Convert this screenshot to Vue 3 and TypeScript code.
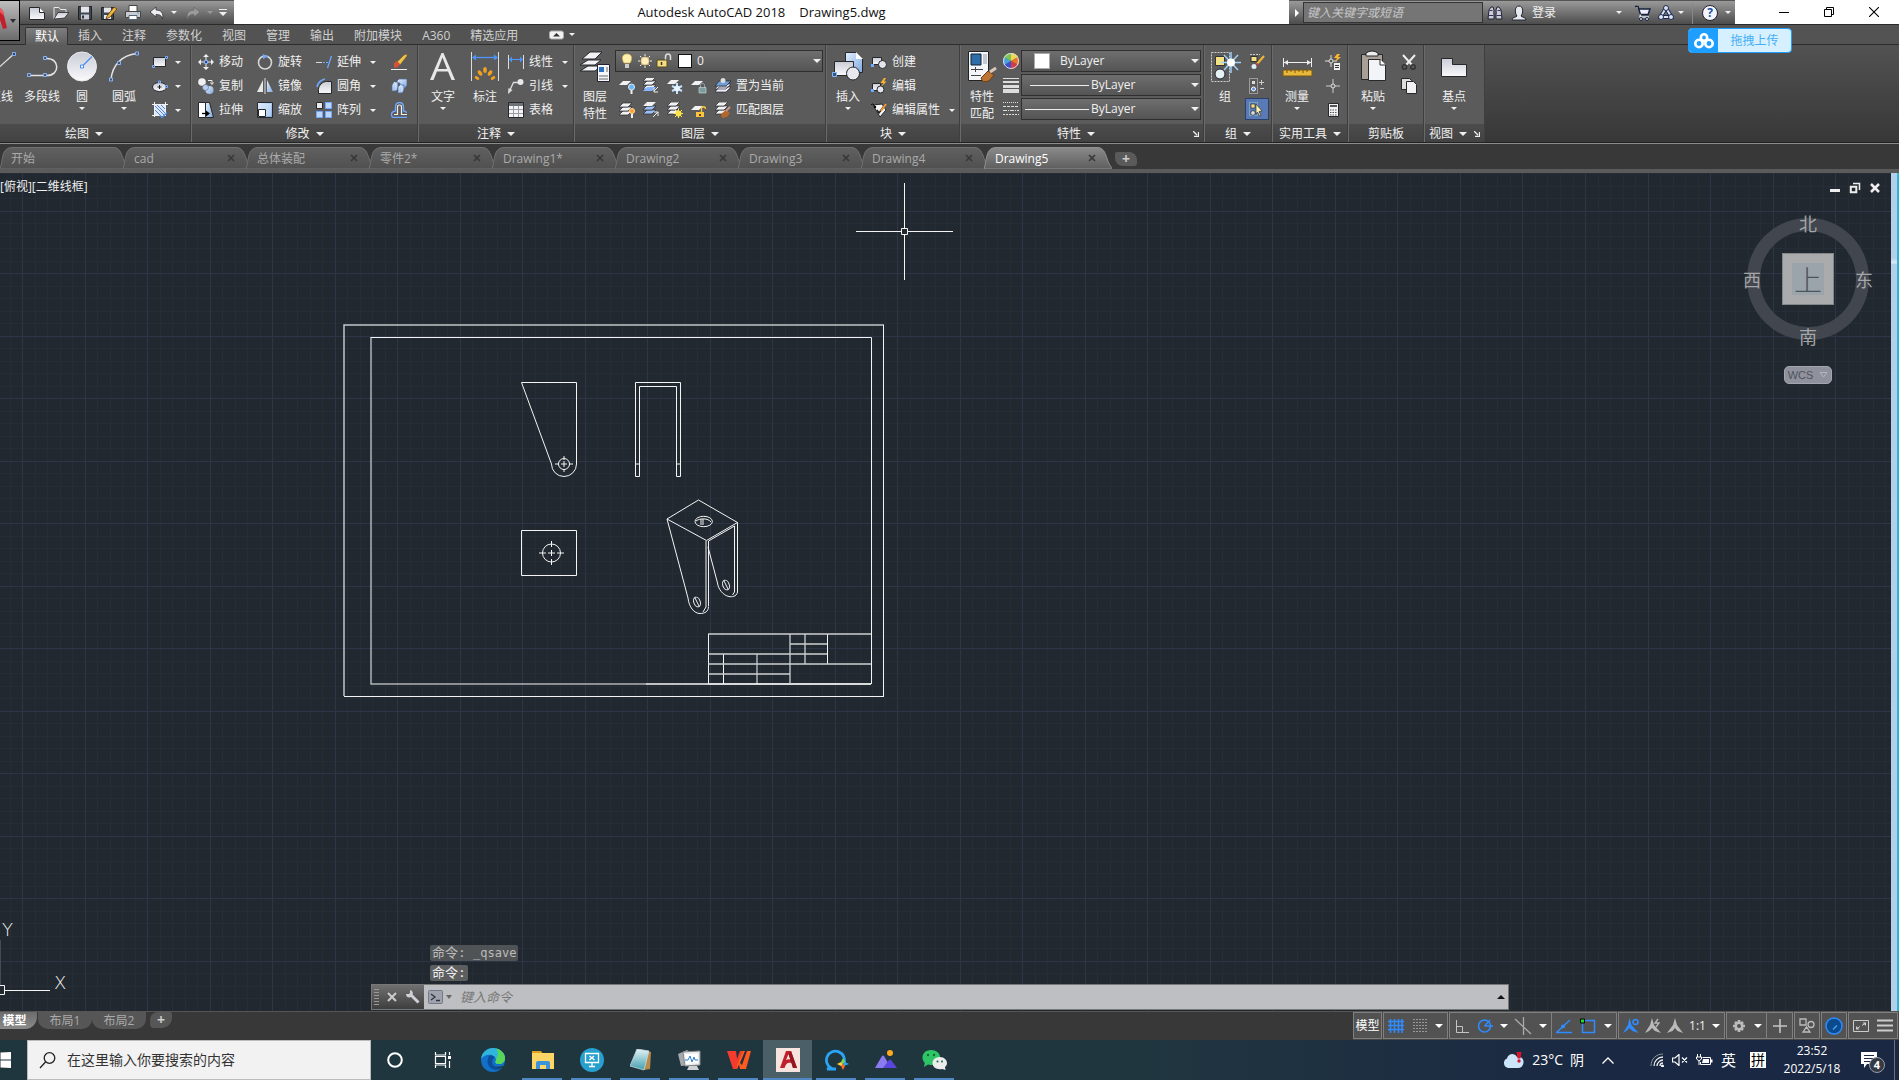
<script setup lang="ts">
import { h, ref } from 'vue'

const O = '#26282c'
const stack = (fill: string, x = 0, y = 0) =>
  [8, 4, 0].map(d => `<path d="M${x + 4} ${y + d}h9l-4 4h-9z" fill="${fill}" stroke="${O}" stroke-width=".7"/>`).join('')

// name -> [width, height, markup]
const art: Record<string, [number, number, string]> = {
  fresh: [16, 16, `<path d="M.5 2.500h10l5 5v7h-15z" fill="url(#gw)" stroke="${O}"/><path d="M10.500 2.500v5h5" fill="#fff" stroke="${O}"/>`],
  open: [16, 16, `<path d="M1 14V2.500h5l1.500 2H13V8" fill="#777" stroke="#e8e8ee"/><path d="M1 14l4-6.500h11L11.500 13z" fill="url(#gw)" stroke="${O}" stroke-width=".8"/>`],
  save: [16, 16, `<path d="M1.500 1.500h13v13h-13z" fill="#3d4653" stroke="#222"/><path d="M4 1.500h8v6H4z" fill="#e6e6ea"/><path d="M4 9.500h8v5H4z" fill="#c9ccd4"/><path d="M5 10.500h2v3H5z" fill="#333"/>`],
  saveas: [16, 16, `<path d="M.5 2.500h12v12H.5z" fill="#3d4653" stroke="#222"/><path d="M3 2.500h7v5H3zM3 10h7v4H3z" fill="#e6e6ea"/><path d="M6 11l7-9 3 2-7 8-4 2z" fill="#f0b53c" stroke="#5b3b12" stroke-width=".8"/>`],
  print: [16, 16, `<path d="M4 .5h8V7H4z" fill="#fff" stroke="#444"/><path d="M.5 6.500h15v6H.500z" fill="#c9ccd2" stroke="#444"/><path d="M4 10.500h8v4H4z" fill="#fff" stroke="#567"/><path d="M12 8h2" stroke="#5599dd"/>`],
  undo: [16, 16, `<path d="M1 7l6-5v3c5 0 8 3 6.500 9C12.500 10.500 11 9.500 7 9.500V12z" fill="#eceef2" stroke="#333" stroke-width=".8"/>`],
  redo: [16, 16, `<path d="M15 7L9 2v3c-5 0-8 3-6.500 9C3.500 10.500 5 9.500 9 9.500V12z" fill="#9a9a9a" stroke="#6a6a6a" stroke-width=".8"/>`],
  binoc: [18, 16, `<path d="M2 14l1-9 2-3h2l1 3v9zM16 14l-1-9-2-3h-2l-1 3v9z" fill="#ccd" stroke="#223"/><path d="M7 6h4v3H7z" fill="#556"/><path d="M3.500 5.500h3M11.500 5.500h3M2.500 10.500h5M10.500 10.500h5" stroke="#335"/>`],
  user: [16, 16, `<path d="M1 15c0-3 4-2.500 5-4-2-2-3-10 2-10s4 8 2 10c1 1.500 5 1 5 4z" fill="#e8e9ee" stroke="#1f2430"/>`],
  cart: [17, 16, `<path d="M1 1.500h3l2.500 8H14L16 4H5" fill="#eef" stroke="#14203c" stroke-width="1.400"/><path d="M6.500 9.500L6 12h9" stroke="#dfe4f0" stroke-width="1.500" fill="none"/><circle cx="7" cy="14" r="1.500" fill="#eef" stroke="#14203c"/><circle cx="13" cy="14" r="1.500" fill="#eef" stroke="#14203c"/>`],
  tri: [16, 16, `<path d="M8 3l5.500 9h-11z" fill="none" stroke="#1d2b52" stroke-width="4"/><path d="M8 3l5.500 9h-11z" fill="none" stroke="#dfe4f4" stroke-width="2"/><g fill="#dfe4f4" stroke="#1d2b52"><circle cx="8" cy="3" r="2.500"/><circle cx="13" cy="12" r="2.500"/><circle cx="3" cy="12" r="2.500"/></g>`],
  help: [16, 16, `<circle cx="8" cy="8" r="7.500" fill="#f4f5fa" stroke="#223"/>`],
  min: [10, 10, `<path d="M0 5.500h10" stroke="#000"/>`],
  restore: [10, 10, `<path d="M.5 2.500h7v7h-7zM2.500 2V.5h7v7H8" fill="none" stroke="#000"/>`],
  close: [10, 10, `<path d="M0 0l10 10M10 0L0 10" stroke="#000" stroke-width="1.100"/>`],
  pill: [16, 10, `<rect x=".5" y="1" width="14" height="8" rx="2" fill="#f2f2f2" stroke="#aaa"/><path d="M4 6.500h7L7.500 3z" fill="#333"/>`],
  line: [32, 32, `<path d="M0 30L30 3" stroke="#e4e4e4" stroke-width="1.300"/><path d="M27.500 2.500h3v3h-3z" fill="#445" stroke="#7fb0ff"/>`],
  pline: [32, 32, `<path d="M3 25.500h18c13 0 13-17 0-17" fill="none" stroke="#e4e4e4" stroke-width="1.500"/><g fill="#4c5568" stroke="#86b4ff"><path d="M1.500 23.500h3v3h-3zM17.500 23.500h3v3h-3zM17.500 6.500h3v3h-3z"/></g>`],
  circle: [32, 32, `<circle cx="16" cy="16.500" r="14.500" fill="url(#gw)" stroke="#ececf0"/><path d="M16 16.500L26 6.500" stroke="#4b8df0" stroke-width="1.300"/><path d="M14.500 15h3v3h-3z" fill="#fff" stroke="#4b8df0"/>`],
  arc: [32, 32, `<path d="M3 30C4 15 14 5 29 3.500" fill="none" stroke="#e4e4e4" stroke-width="1.500"/><g fill="#4c5568" stroke="#86b4ff"><path d="M1.500 28h3v3h-3zM9.500 11.500h3v3h-3zM27.500 2h3v3h-3z"/></g>`],
  rect: [16, 16, `<path d="M1.500 3.500h12v9h-12z" fill="url(#gw)" stroke="${O}"/><path d="M.5 11.500h2v2h-2zM13.500 2.500h2v2h-2z" fill="#446" stroke="#7fb0ff"/>`],
  ellipse: [16, 16, `<ellipse cx="7.500" cy="9" rx="7" ry="4.500" fill="url(#gw)" stroke="${O}"/><path d="M5.500 9h4M7.500 7v4" stroke="#222"/><path d="M6.500 3h2v2h-2zM13.500 7.500h2v2h-2z" fill="#446" stroke="#7fb0ff"/>`],
  hatch: [16, 16, `<path d="M3 3h10v10H3z" fill="#dfe9fc"/><path d="M3 8l5 5M3 4l9 9M5 3l8 8M9 3l4 4" stroke="#4f86d8"/><path d="M2.500 0v15M0 2.500h16M13.500 0v14M0 13.500h14" stroke="#f2f2f2" fill="none"/><path d="M10 15.500l5-5M8 13l2 3" stroke="#4b8df0" stroke-width="1.300"/>`],
  move: [16, 16, `<path d="M8 0l3 3H5zM8 16l3-3H5zM0 8l3-3v6zM16 8l-3-3v6z" fill="#eee"/><path d="M8 3v3M8 10v3M3 8h3M10 8h3" stroke="#eee"/><path d="M6.500 6.500h3v3h-3z" fill="#446" stroke="#7fb0ff"/>`],
  rotate: [16, 16, `<circle cx="8" cy="8.500" r="6.500" fill="none" stroke="#d6d6d6" stroke-width="1.600"/><path d="M6 0l5 2.500L6 5z" fill="#6fa8ff"/>`],
  copy: [16, 16, `<circle cx="4" cy="4" r="3.800" fill="#f1f1f4"/><circle cx="11.500" cy="12" r="4" fill="url(#gb)"/><circle cx="7.500" cy="9.500" r="3" fill="#b9cdf0" stroke="#5b6b85" stroke-width=".6"/><path d="M10 2.500h4v3M12.500 4.500L14 6.500l1.500-2" stroke="#eee" fill="none"/>`],
  mirror: [16, 16, `<path d="M6 2v12H0z" fill="#e8e8ec"/><path d="M10 2v12h6z" fill="url(#gb)"/><path d="M8 0v16" stroke="#ddd"/>`],
  stretch: [16, 16, `<path d="M.5.500h7v15h-7z" fill="#fff" stroke="${O}"/><path d="M7.500.500h4l4 15h-8z" fill="url(#gb)" stroke="${O}"/><path d="M4 11.500h6" stroke="#000" stroke-width="1.300"/><path d="M8 8.500l4 3-4 3z"/>`],
  scale: [16, 16, `<path d="M.5.500h15v15H.500z" fill="url(#gb)" stroke="${O}"/><path d="M2 2h12v12H9V7H2z" fill="#dce9fb" opacity=".5"/><path d="M1.500 7.500h7v7h-7z" fill="#fff" stroke="${O}"/>`],
  extend: [16, 16, `<path d="M0 8.500h6" stroke="#ddd"/><path d="M7 8.500h5" stroke="#6fa8ff" stroke-dasharray="2 1"/><path d="M15.500 2l-4 12" stroke="#6fa8ff" stroke-width="1.300"/>`],
  fillet: [16, 16, `<path d="M2.500 15.500v-4c0-4 4-8 8-8h5v12z" fill="url(#gw)" stroke="${O}"/><path d="M1 9c1-5 4-7 8-8" stroke="#6fa8ff" stroke-width="1.600" fill="none"/>`],
  array: [16, 16, `<path d="M.5.500h6v6h-6z" fill="#e9e9ee" stroke="${O}"/><g fill="#bdd6ff" stroke="#6fa8ff"><path d="M9.500.500h6v6h-6zM9.500 9.500h6v6h-6zM.5 9.500h6v6h-6z"/></g>`],
  erase: [16, 16, `<path d="M6 8l7-7 3-1v2L9 11z" fill="#ecc44b" stroke="#7b5718" stroke-width=".6"/><path d="M3 9l3-2 3 3-2 3-4 1z" fill="#d5503a"/><path d="M0 15.500h16" stroke="#eee"/>`],
  explode: [16, 16, `<g fill="url(#gb)" stroke="#4d6a95" stroke-width=".7"><path d="M6 3l2-2h8v6l-2 3H9V5H6z"/><path d="M1 7l2-3h4v6l-2 3H1z"/><path d="M7 9l2-2h4v5l-2 3H7z"/></g><path d="M3 4l2 2v6M9 7l2 2v5" stroke="#eef4ff" stroke-width=".8" fill="none"/>`],
  offset: [16, 16, `<path d="M16 15.500H3q-2.500 0-2.500-3t4-3.500V5q0-4.500 4-4.500t4 4.500v4q3 0 3 2" fill="none" stroke="#6fa8ff" stroke-width="1.300"/><path d="M16 12.500h-5.500V5q0-2-2-2t-2 2v7.500H3" fill="none" stroke="#eee" stroke-width="1.200"/>`],
  letter: [32, 32, `<path d="M3 30L14.500 3h2L28 30h-3.500l-3.500-8.500H10L6.500 30zM11 19h9L15.500 7.500z" fill="#e8e8e8"/>`],
  dim: [28, 32, `<path d="M.5 2v29M27.500 2v29" stroke="#ddd"/><path d="M2 7.500h24" stroke="#4d94ff" stroke-width="1.300"/><path d="M1 7.500l4-3v6zM27 7.500l-4-3v6z" fill="#4d94ff"/><g fill="#f3a21f"><ellipse cx="14" cy="20" rx="1.800" ry="3"/><ellipse cx="9" cy="23" rx="1.800" ry="3" transform="rotate(-35 9 23)"/><ellipse cx="19" cy="23" rx="1.800" ry="3" transform="rotate(35 19 23)"/><ellipse cx="6" cy="28" rx="1.500" ry="2.500" transform="rotate(-60 6 28)"/><ellipse cx="22" cy="28" rx="1.500" ry="2.500" transform="rotate(60 22 28)"/></g>`],
  linear: [16, 16, `<path d="M.5 1v14M15.500 1v14" stroke="#ddd"/><path d="M2 5.500h12" stroke="#4d94ff"/><path d="M1 5.500l3-3v6zM15 5.500l-3-3v6z" fill="#4d94ff"/>`],
  leader: [16, 16, `<path d="M1 14L5.500 4.500H10" stroke="#ddd" fill="none" stroke-width="1.300"/><circle cx="12.500" cy="4" r="3" fill="#e8e8ec"/><path d="M0 16l.5-6 4 2z" fill="#ddd"/>`],
  table: [16, 16, `<path d="M.5.500h15v15H.500z" fill="#f3f3f6" stroke="${O}"/><path d="M1 1h14v3H1z" fill="#6d7178"/><path d="M1 7.500h14M1 11.500h14M5.500 4v11M10.500 4v11" stroke="#9a9da5"/>`],
  layers: [32, 32, `<g fill="#f2f2f5" stroke="${O}"><path d="M9 16h13l-6 5H1z"/><path d="M9 10h13l-6 5H1z"/><path d="M11 2h12l-7 7H3z"/></g><path d="M18.500 14.500h12v17h-12z" fill="#f5f6fa" stroke="#223"/><path d="M20 17h5v5h-5z" fill="#2f6fc2"/><path d="M28 17v5M20 26h9M20 29h9" stroke="#666"/>`],
  off: [16, 16, `<path d="M4 3h8L8 7H0z" fill="#f2f2f5"/><circle cx="12.500" cy="9" r="3" fill="#6fb4f5" stroke="#d8ecff"/><path d="M11.500 12h2v4h-2z" fill="#eee"/>`],
  iso: [16, 16, stack('#f2f2f5', 0, -1) + `<path d="M4 9h9l-4 4H0z" fill="#86b6ff"/><path d="M15 9l-4 4M11 10v4h4" stroke="#eee" fill="none"/>`],
  freeze: [16, 16, `<path d="M4 2h8L8 6H0z" fill="#f2f2f5"/><path d="M10 5v11M5 8l10 5M15 8L5 13" stroke="#bfe0ff" stroke-width="2"/><circle cx="10" cy="10.500" r="3" fill="#fff" opacity=".7"/>`],
  lock: [16, 16, `<path d="M4 3h8L8 7H0z" fill="#f2f2f5"/><path d="M9.500 10V7.500c0-3 4-3 4 0V10" stroke="#9ab" fill="none"/><path d="M8 9.500h7V15H8z" fill="#7d9c9c" stroke="#cdd" stroke-width=".6"/>`],
  current: [16, 16, `<path d="M4 9h12l-5 5H0zM4 6h12l-5 5H0z" fill="#eef" stroke="${O}" stroke-width=".7"/><path d="M4 3h12l-5 5H0z" fill="#6f9ed8" stroke="${O}" stroke-width=".7"/><circle cx="8" cy="2.500" r="2.500" fill="#ddd"/>`],
  on: [16, 16, stack('#f2f2f5', 0, 1) + `<circle cx="13" cy="9" r="2.500" fill="#ff9d2c" stroke="#ffe0a0"/><path d="M12 12h2v4h-2z" fill="#eee"/>`],
  uniso: [16, 16, stack('#9cc0f5', 0, 0) + `<path d="M4 0h9L9 4H0z" fill="#f2f2f5"/><path d="M10 15l5-5M11 10h4v4" stroke="#eee" fill="none"/>`],
  thaw: [16, 16, stack('#f2f2f5', 0, 0) + `<circle cx="11.500" cy="11.500" r="3" fill="#ffe34a"/><path d="M11.500 6.500v9.500M6.500 11.500h9.500M8 8l7 7M15 8l-7 7" stroke="#ffe34a"/>`],
  unlock: [16, 16, `<path d="M4 4h8L8 8H0z" fill="#f2f2f5"/><path d="M10.500 10V7c0-3 4-3 4 0" stroke="#ffc53a" fill="none" stroke-width="1.300"/><path d="M5 10h8v5H5z" fill="#ffc53a"/><path d="M8 12h2v2H8z" fill="#543"/>`],
  match: [16, 16, stack('#f2f2f5', 0, 0) + `<path d="M6 12l5-4 4 3-3 4-5 1z" fill="#b5672a"/><path d="M11 9l4-4" stroke="#c98" stroke-width="2"/>`],
  bulb: [14, 16, `<path d="M7 1c-6 0-5 6-3 9h6c2-3 3-9-3-9z" fill="#fff0ae" stroke="#d8b65a" stroke-width=".7"/><path d="M5 11h4v4H5z" fill="#ccc"/>`],
  sun: [16, 16, `<circle cx="8" cy="8" r="4" fill="#ffefc0" stroke="#e8c27a"/><path d="M8 1v2M8 13v2M1 8h2M13 8h2M3 3l1.500 1.500M11.500 11.500L13 13M13 3l-1.500 1.500M3 13l1.500-1.500" stroke="#eee"/>`],
  padlock: [16, 16, `<path d="M9.500 7V4c0-4 5-4 5 0v3" stroke="#ddd" fill="none" stroke-width="1.500"/><path d="M1 7h10v7H1z" fill="#f2dc82" stroke="#5b4a1c"/><path d="M5.500 9v3" stroke="#432" stroke-width="1.500"/>`],
  insert: [32, 32, `<path d="M13.500 2.500h11l6 6v14h-17z" fill="url(#gb)" stroke="${O}"/><path d="M24 2l7 7h-7z" fill="#fff"/><path d="M2.500 11.500h19v14h-19z" fill="url(#gw)" stroke="${O}"/><circle cx="21" cy="23.500" r="6.500" fill="#e8e9ef" stroke="${O}"/><path d="M.5 22.500h4v4h-4z" fill="#357" stroke="#86b4ff"/>`],
  create: [16, 16, `<path d="M1.500 3.500h9v7h-9z" fill="url(#gw)" stroke="${O}"/><circle cx="11.500" cy="10.500" r="4" fill="#e4e5ec" stroke="${O}"/><path d="M0 10h3v3H0z" fill="#6fa8ff"/>`],
  edit: [16, 16, `<path d="M1.500 5.500h8v7h-8z" fill="url(#gw)" stroke="${O}"/><circle cx="9.500" cy="11.500" r="3.500" fill="#e4e5ec" stroke="${O}"/><path d="M13 0L9.500 5h3L10 9l5.500-5.500H13L15 0z" fill="#ffb52c"/><path d="M0 11h3v3H0z" fill="#6fa8ff"/>`],
  attr: [16, 16, `<path d="M2 3l9-1 4 6-6 7z" fill="#f4f4f6" stroke="${O}"/><circle cx="4" cy="5" r="1.200"/><path d="M0 3q2-3 4 2" stroke="#111" fill="none"/><path d="M6 8l2 3 5-7" stroke="#222" stroke-width="1.500" fill="none"/><path d="M10 9l5-7" stroke="#ef9a2f" stroke-width="2"/>`],
  props: [32, 32, `<path d="M2.500 1.500h20v29h-20z" fill="#f4f5f8" stroke="#222"/><path d="M5 4h10v11H5z" fill="#2f6da8" stroke="#123"/><path d="M17 4h4v10h-4z" fill="#c5c8d0"/><path d="M5 19.500h12M9.500 17v5M5 25.500h10" stroke="#444"/><path d="M15 28l7-7 6 4-5 6-6 1z" fill="#bc7434" stroke="#6b3c14"/><path d="M24 22l6-4" stroke="#d8c9b8" stroke-width="3"/>`],
  wheel: [16, 16, `<path d="M8 8V0a8 8 0 0 1 7 4z" fill="#f2d94a"/><path d="M8 8l7-4a8 8 0 0 1 0 8z" fill="#e8762c"/><path d="M8 8l7 4a8 8 0 0 1-7 4z" fill="#d33a4a"/><path d="M8 8v8a8 8 0 0 1-7-4z" fill="#3f4fc9"/><path d="M8 8l-7 4a8 8 0 0 1 0-8z" fill="#4aa3dd"/><path d="M8 8L1 4a8 8 0 0 1 7-4z" fill="#7cc35a"/><circle cx="8" cy="8" r="7.500" fill="none" stroke="#ddd"/>`],
  weight: [16, 16, `<path d="M0 1.500h16" stroke="#ddd"/><path d="M0 5h16" stroke="#ddd" stroke-width="2"/><path d="M0 9.500h16" stroke="#ddd" stroke-width="3"/><path d="M0 14h16" stroke="#ddd" stroke-width="4"/>`],
  ltype: [16, 16, `<g stroke="#ddd"><path d="M0 1.500h16" stroke-dasharray="1 1"/><path d="M0 5.500h16" stroke-dasharray="3 1"/><path d="M0 9.500h16" stroke-dasharray="4 1 1 1"/><path d="M0 13.500h16" stroke-dasharray="2 1"/></g>`],
  group: [32, 32, `<path d="M2.500 2.500h18v29h-18z" fill="none" stroke="#ccc" stroke-dasharray="2 1"/><path d="M6.500 6.500h9v9h-9z" fill="#f4e184" stroke="#333"/><circle cx="11" cy="24" r="5" fill="#e6f1f3" stroke="#223"/><path d="M22 2v21M12 12.500h20M15 5l14 15M29 5L15 20" stroke="#9ad2ff" stroke-width="1.500"/><circle cx="22" cy="12.500" r="4" fill="#fff"/>`],
  gedit: [16, 16, `<path d="M1 .5h10" stroke="#ccc" stroke-dasharray="2 1"/><path d="M2 2.500h6v5H2z" fill="#f4e184" stroke="#333"/><circle cx="5" cy="12.500" r="2.500" fill="#dfeef0"/><path d="M8 10l7-8" stroke="#f0b53c" stroke-width="2"/><path d="M7 12l1-3 2 1z" fill="#d33"/>`],
  gadd: [16, 16, `<path d="M.5.500h8v15h-8z" fill="none" stroke="#ddd" stroke-dasharray="1 1"/><path d="M3 3h3v3H3z" fill="#ddd"/><circle cx="4.500" cy="11" r="2" fill="#5a94ee" stroke="#fff"/><path d="M10 4.500h5M12.500 2v5M11 10.500h4" stroke="#ccc"/>`],
  gsel: [16, 16, `<path d="M.5 1.500h8v13h-8z" fill="none" stroke="#9cc" stroke-dasharray="1 1"/><path d="M2 3h4v4H2z" fill="#f4e184" stroke="#333" stroke-width=".7"/><circle cx="4" cy="12" r="2.300" fill="#ddd" stroke="#333" stroke-width=".7"/><path d="M7 3l6 7-3 .5 2 4-1.500.500-2-4L7 13z" fill="#fff3b0" stroke="#333" stroke-width=".7"/>`],
  measure: [32, 32, `<path d="M2.500 8v9M30.500 8v9M3 12.500h27" stroke="#eee"/><path d="M3 12.500l4-2.500v5zM30 12.500l-4-2.500v5z" fill="#eee"/><path d="M2 20h29v6H2z" fill="#e7b93a" stroke="#7a5513"/><path d="M6 20v3M10 20v2M14 20v3M18 20v2M22 20v3M26 20v2" stroke="#7a5513"/>`],
  qsel: [16, 16, `<path d="M6 1v12M0 7h12" stroke="#ddd"/><circle cx="6" cy="7" r="2" fill="#555" stroke="#ddd"/><path d="M12 0L9 4h3l-2 4 6-5h-3l2-3z" fill="#ffb52c"/><path d="M9 9h6v7H9z" fill="#eee"/><path d="M10 11.500h4M10 13.500h4" stroke="#333"/>`],
  point: [16, 16, `<path d="M8 1v14M1 8h14" stroke="#ccc"/><circle cx="8" cy="8" r="2" fill="#666" stroke="#ddd"/>`],
  calc: [16, 16, `<path d="M3.500 1.500h10v13h-10z" fill="#f1f1f4" stroke="${O}"/><path d="M5 3h7v2H5z" fill="#555"/><path d="M5 8h7M5 10.500h7M5 13h7" stroke="#555" stroke-dasharray="1.500 1"/>`],
  paste: [32, 32, `<path d="M4.500 4.500h21v25h-21z" fill="#a89f97" stroke="${O}"/><path d="M9 3q6-4 12 0v3H9z" fill="#eee" stroke="${O}"/><path d="M11.500 9.500h12l5 5v16h-17z" fill="#f3f4f8" stroke="${O}"/><path d="M23 9v6h6" fill="#fff" stroke="${O}"/>`],
  cut: [16, 16, `<path d="M2 1l9 10M14 1L5 11" stroke="#eee" stroke-width="2"/><circle cx="3.500" cy="13" r="2.200" fill="none" stroke="#333" stroke-width="1.500"/><circle cx="12" cy="13" r="2.200" fill="none" stroke="#333" stroke-width="1.500"/>`],
  docs: [16, 16, `<path d="M.5.500h8l2 2v9h-10z" fill="#ddd" stroke="${O}"/><path d="M5.500 3.500h7l3 3v9h-10z" fill="#f1f1f4" stroke="${O}"/>`],
  base: [32, 32, `<path d="M3.500 8.500h11v6h14v12h-25z" fill="url(#gw)" stroke="${O}"/>`],
  launch: [6, 6, `<path d="M0 0l4 4M5.500 1v4.500H1" stroke="#eee" stroke-width="1.300" fill="none"/>`],
  x: [8, 8, `<path d="M1 1l6 6M7 1L1 7" stroke="#383838" stroke-width="1.700"/>`],
  cloud: [20, 16, `<g fill="none" stroke="#fff" stroke-width="2.600"><circle cx="10" cy="4.500" r="3.200"/><circle cx="5" cy="10.500" r="3.700"/><circle cx="15" cy="10.500" r="3.700"/></g>`],
  mmin: [12, 12, `<path d="M1 7h10v3H1z" fill="#eee"/>`],
  mres: [12, 12, `<path d="M1.800 4.800h5.500v5.500H1.800z" fill="none" stroke="#eee" stroke-width="2"/><path d="M4 1.500h6.500V8" fill="none" stroke="#eee" stroke-width="1.500"/>`],
  mclose: [12, 12, `<path d="M2 2l8 8M10 2l-8 8" stroke="#eee" stroke-width="2.500"/>`],
  cx: [10, 10, `<path d="M1 1l8 8M9 1L1 9" stroke="#ccc" stroke-width="2"/>`],
  wrench: [14, 14, `<path d="M5 5l7.500 7.500" stroke="#d0d0d4" stroke-width="3"/><path d="M4 0v3L3 4H0c0 4 4 4 5.500 2.500S8 1 4 0z" fill="#d0d0d4"/>`],
  prompt: [16, 14, `<rect x=".5" y=".5" width="14" height="13" rx="1" fill="#9fa3ae" stroke="#737985"/><path d="M3 4l4 3-4 3M8 10.500h4" stroke="#30343c" fill="none" stroke-width="1.300"/>`],
  sgrid: [16, 16, `<path d="M2.500 1v14M6.500 1v14M10.500 1v14M14 1v14M0 3.500h16M0 7.500h16M0 11.500h16" stroke="#2f8cff" stroke-width="1.500"/>`],
  sdots: [16, 16, `<path d="M1.500 1.500h14M1.500 4.500h14M1.500 7.500h14M1.500 10.500h14M1.500 13.500h14" stroke="#ddd" stroke-dasharray="1 2"/>`],
  ortho: [16, 16, `<path d="M2.500 2v12.500H15M2.500 8.500h6v6" stroke="#c4c4c4" fill="none"/>`],
  polar: [16, 16, `<circle cx="7.500" cy="8" r="6" fill="none" stroke="#2f8cff" stroke-width="1.600"/><path d="M7.500 8h8.500M7.500 8L13 2" stroke="#2f8cff" stroke-width="1.300"/>`],
  isod: [18, 18, `<path d="M9.500 0v18M1 2l16 15" stroke="#aaa" stroke-width="1.300"/>`],
  otrack: [16, 16, `<path d="M0 14.500h16M1 14L14 2" stroke="#2f8cff" stroke-width="1.500"/><circle cx="7" cy="8.500" r="2" fill="#2f8cff"/>`],
  osnap: [16, 16, `<path d="M2.500 2.500h12v12h-12z" fill="none" stroke="#2f8cff" stroke-width="1.500"/><path d="M.5 1h4v4h-4z" fill="#1fe01f" stroke="#000"/>`],
  anb: [16, 16, `<path d="M6.500 0l2 7 7 8-6-2-3-3-3 3-3.500 2 5-8z" fill="#2f8cff"/><circle cx="12.500" cy="4" r="2.500" fill="none" stroke="#2f8cff" stroke-width="1.500"/>`],
  ans: [16, 16, `<path d="M7 0l2 7 7 8-6-2-3-3-3 3-4 2 5-8z" fill="#b9b9b9"/><path d="M13 1l-3 4h4l-3 4" stroke="#b9b9b9" fill="none" stroke-width="1.300"/>`],
  anp: [16, 16, `<path d="M8 0l2 7 6 8-5.500-2L8 10l-2.500 3L0 15l6-8z" fill="#b9b9b9"/>`],
  gear: [14, 14, `<path d="M7 1v12M1 7h12M3 3l8 8M11 3l-8 8" stroke="#bcbcbc" stroke-width="2.600"/><circle cx="7" cy="7" r="4.500" fill="#bcbcbc"/><circle cx="7" cy="7" r="2" fill="#525252"/>`],
  plus: [14, 14, `<path d="M7 0v14M0 7h14" stroke="#c4c4c4" stroke-width="1.600"/>`],
  shapes: [16, 16, `<path d="M1 1h6v6H1zM4 14l3.500-5 3.500 5z" fill="none" stroke="#bcbcbc" stroke-width="1.300"/><circle cx="12" cy="6.500" r="3" fill="none" stroke="#bcbcbc" stroke-width="1.300"/>`],
  perf: [18, 18, `<circle cx="9" cy="9" r="8" fill="#0b4a8c" stroke="#2f8cff" stroke-width="1.500"/><path d="M8 12.500l4-4" stroke="#3fa4ff" fill="none" stroke-width="1.500"/>`],
  clean: [16, 12, `<path d="M.5.500h15v11H.500z" fill="none" stroke="#ccc"/><path d="M3 9.500V6l3.500 3.500zM13 2.500V6L9.500 2.500z" fill="#ccc"/><path d="M4 8.500l3-2M9 5.500l3-2" stroke="#ccc"/>`],
  burger: [16, 14, `<path d="M0 1.500h16M0 6.500h16M0 11.500h16" stroke="#ccc" stroke-width="2"/>`],
  win: [22, 16, `<path d="M2 1.500L10.500.500v7H2zM11.500.500L22 0v7.500H11.500zM2 8.500h8.500v7L2 14.500zM11.500 8.500H22V16l-10.500-.500z" fill="#fff"/>`],
  search: [17, 17, `<circle cx="10.500" cy="6" r="5.300" fill="none" stroke="#222" stroke-width="1.300"/><path d="M6.500 10L1 16" stroke="#222" stroke-width="1.300"/>`],
  cortana: [16, 16, `<circle cx="8" cy="8" r="6.800" fill="none" stroke="#fff" stroke-width="2"/>`],
  taskview: [18, 16, `<path d="M1.500 0v3h10V0M1.500 16v-3h10v3M1.500 4.500h10v7h-10zM15.500 0v3M15.500 9v7" fill="none" stroke="#fff" stroke-width="1.200"/><path d="M14 4h3v3h-3z" fill="#fff"/>`],
  edge: [24, 24, `<circle cx="12" cy="12" r="12" fill="#1270c9"/><path d="M0 11C1 4 6 0 12 0c7 0 12 5 12 10 0 4-3 6-6 6-4 0-4-2-3-4 0-4-5-6-9-5C3 8 1 9 0 11z" fill="#2fb6dd"/><path d="M15 .400C21 2 24 6 24 10c0 4-3 6-6 6-4 0-4-2-3-4 1-3 4-6 0-11.600z" fill="#58d65a"/><path d="M8 8c-3 4-2 13 7 14 3 0 5-1 7-4-5 2-11 1-11-4 0-2 1-4 3-5-2-1-4-2-6-1z" fill="#0b4f9c"/><path d="M11 13c0 5 5 7 11 5l2-1v3h-6c-4-1-7-4-7-7z" fill="#203a42"/>`],
  folder: [22, 20, `<path d="M0 1h9l2 3H0z" fill="#e0a21e"/><path d="M0 3h22v16H0z" fill="#ffd565"/><path d="M4 19v-6q0-2 2-2h10q2 0 2 2v6h-4v-4H8v4z" fill="#3b94d9"/>`],
  screen: [24, 24, `<circle cx="12" cy="12" r="12" fill="#27a0cf"/><path d="M5.500 5.500h13v9h-13zM9 18.500h6M12 15v3" fill="none" stroke="#fff" stroke-width="1.300"/><path d="M9.500 8l5 4M14 8l-4.500 4" stroke="#fff" stroke-width="1.500"/>`],
  notepad: [22, 22, `<path d="M8 1l13 2-1 17-6 1z" fill="#b88a4a"/><path d="M7 0l12 2-5 19L0 17z" fill="url(#gn)" stroke="#c8d8dc" stroke-width=".8"/>`],
  monitor: [24, 22, `<path d="M0 5l9-4 3 2v13l-9 1z" fill="#a4a9ad"/><path d="M5 3l17-1v14l-15 1z" fill="#e8eaec" stroke="#888"/><path d="M7 5l13-.5V14L8 15z" fill="#fff"/><path d="M7 11h3l2-4 2 6 2-5 1 3h3" stroke="#2a7fd0" fill="none"/><path d="M11 17h8l2 4H9z" fill="#cfd2d4"/>`],
  wps: [24, 20, `<path d="M0 1h9l1 8 3-8h5l-8 18H6z" fill="#f33c2e"/><path d="M10 15l6-14h8l-5 18h-6l-1-5-2 5" fill="#ff5a1f"/><path d="M13 13l5-12h2l-5 14z" fill="#203038"/>`],
  acad: [24, 24, `<path d="M0 0h24v24H0z" fill="#f8e4de"/><path d="M4 20L10 3h5l6 17h-4l-1.500-5C12 14 10 15 8.500 20zM10 12q2-1 4.500-.500L12.500 6z" fill="#c01f2b"/><path d="M15 3l6 17h-4L12.500 6z" fill="#951621"/>`],
  browser: [24, 22, `<path d="M19 14A9 9 0 1 0 6 19l-4 1h9" fill="none" stroke="#2aa4f4" stroke-width="2.800"/><path d="M18 9l2 4-2 2-2-2z" fill="#7bdb4a"/><path d="M24 15l-5 2-1-2 2-2z" fill="#2aa4f4"/><path d="M18 21l-2-4 2-2 2 2z" fill="#ff6a1f"/><path d="M12 15l4-2 2 2-2 2z" fill="#ffd23c"/>`],
  photo: [24, 22, `<path d="M1 19L8 7q1-1 2 0l7 12z" fill="#8b7bf0"/><path d="M9 19l6-8q1-1 2 0l6 8z" fill="#5a45dd"/><circle cx="16" cy="4" r="3" fill="#ffab1c"/>`],
  wechat: [25, 22, `<path d="M9 1c5 0 9 3 9 7s-4 8-9 8l-3-.500L2 18l.800-4C-2 9 1 1 9 1z" fill="#2dc565"/><path d="M18 8c4 0 7 3 7 6 0 2-1 3-2 4l.5 3-3-1c-6 1-10-2-10-6s4-6 7.500-6z" fill="#ececec"/><g fill="#156b35"><circle cx="6" cy="6" r="1.200"/><circle cx="12" cy="6" r="1.200"/><circle cx="15.500" cy="12.500" r="1"/><circle cx="20" cy="12.500" r="1"/></g>`],
  weather: [22, 16, `<path d="M6 16a5 5 0 0 1-1-9.500C6 2 12 0 15 5c4-1 7 2 6.500 6-.5 3-2.500 5-5.500 5z" fill="#cbe5fa"/><path d="M14.500 0h5l-1 6.500h-3z" fill="#d9142f"/><circle cx="17" cy="9" r="1.700" fill="#d9142f"/>`],
  chev: [12, 7, `<path d="M.5 6.500L6 1l5.500 5.500" stroke="#fff" fill="none" stroke-width="1.300"/>`],
  wifi: [14, 14, `<path d="M1 13C1 6 6 1 13 1" stroke="#899" fill="none"/><path d="M4 13c0-5 4-9 9-9M7 13c0-3 3-6 6-6M10 13c0-2 1-3 3-3" stroke="#eee" fill="none" stroke-width="1.300"/><circle cx="12.500" cy="13" r="1.500" fill="#fff"/>`],
  mute: [16, 12, `<path d="M.5 4H3l4-3.500v11L3 8H.500zM10 3.500l5 5M15 3.500l-5 5" stroke="#fff" fill="none" stroke-width="1.200"/>`],
  battery: [17, 14, `<path d="M6.500 4.500h8v7h-10V9" fill="none" stroke="#fff"/><path d="M7 6h6v4H6z" fill="#fff"/><path d="M15 6.500h1.500v3H15z" fill="#fff"/><path d="M1.500 1v3M4.500 1v3M.5 4h5v2L3 8 .5 6zM3 8v4" stroke="#fff" fill="none"/>`],
  note: [16, 16, `<path d="M0 0h16v12H6l-3 4v-4H0z" fill="#fff"/><path d="M3 3.500h10M3 6.500h10M3 9.500h6" stroke="#1a2843"/>`],
}

const Icon = (p: { n: string }) => {
  const [w, hh, body] = art[p.n]
  return h('svg', { width: w, height: hh, viewBox: `0 0 ${w} ${hh}`, 'aria-hidden': 'true', innerHTML: body })
}
Icon.props = ['n']

const ribbonTabs = ['默认', '插入', '注释', '参数化', '视图', '管理', '输出', '附加模块', 'A360', '精选应用']
const draw = [
  { n: 'line', t: '直线', a: false },
  { n: 'pline', t: '多段线', a: false },
  { n: 'circle', t: '圆', a: true },
  { n: 'arc', t: '圆弧', a: true },
]
const modify = [
  { n: 'move', t: '移动' }, { n: 'rotate', t: '旋转' }, { n: 'extend', t: '延伸', a: true }, { n: 'erase', t: '' },
  { n: 'copy', t: '复制' }, { n: 'mirror', t: '镜像' }, { n: 'fillet', t: '圆角', a: true }, { n: 'explode', t: '' },
  { n: 'stretch', t: '拉伸' }, { n: 'scale', t: '缩放' }, { n: 'array', t: '阵列', a: true }, { n: 'offset', t: '' },
]
const docs = ['开始', 'cad', '总体装配', '零件2*', 'Drawing1*', 'Drawing2', 'Drawing3', 'Drawing4', 'Drawing5']
const active = ref(8)
const apps = [
  { n: 'cortana', l: 'Cortana' }, { n: 'taskview', l: '任务视图' }, { n: 'edge', l: 'Edge' },
  { n: 'folder', l: '文件资源管理器', run: true }, { n: 'screen', l: '屏幕', run: true }, { n: 'notepad', l: '记事本', run: true },
  { n: 'monitor', l: '监视器', run: true }, { n: 'wps', l: 'WPS', run: true }, { n: 'acad', l: 'AutoCAD', run: true, on: true },
  { n: 'browser', l: '浏览器', run: true }, { n: 'photo', l: '图片', run: true }, { n: 'wechat', l: '微信', run: true },
]

// grid lines of the model space, five minor steps to a major one
const step = 12.504
const grid = Array.from({ length: 320 }, (_, i) => ({
  x: Math.round(9.500 + i * step) + 0.5,
  y: Math.round(i * step) + 0.5,
  mx: i % 5 === 1,
  my: i % 5 === 3,
}))
</script>

<template>
  <div class="app">
    <svg width="0" height="0" class="defs" aria-hidden="true">
      <defs>
        <linearGradient id="gw" x1="0" y1="0" x2="0" y2="1"><stop offset="0" stop-color="#c9ccd6" /><stop offset="1" stop-color="#fafafc" /></linearGradient>
        <linearGradient id="gb" x1="0" y1="0" x2="1" y2="1"><stop offset="0" stop-color="#e2efff" /><stop offset="1" stop-color="#7fa9e0" /></linearGradient>
        <linearGradient id="gn" x1="0" y1="0" x2="0" y2="1"><stop offset="0" stop-color="#e4f2f4" /><stop offset="1" stop-color="#3f9fb0" /></linearGradient>
        <linearGradient id="gt" x1="0" y1="0" x2="0" y2="1"><stop offset="0" stop-color="#606060" /><stop offset="1" stop-color="#505050" /></linearGradient>
        <linearGradient id="ga" x1="0" y1="0" x2="0" y2="1"><stop offset="0" stop-color="#8a8a8a" /><stop offset="1" stop-color="#5e5e5e" /></linearGradient>
      </defs>
    </svg>

    <header class="title">
      <button class="logo" aria-label="应用程序菜单">
        <svg width="8" height="26" viewBox="0 0 8 26"><path d="M0 0l3 3 4 17-4 1-3-9z" fill="#c2202c" /><path d="M0 0l3 3 1 5-4-4z" fill="#ea5a60" /></svg>
        <i class="ar mid dark"></i>
      </button>
      <div class="qat">
        <button v-for="n in ['fresh', 'open', 'save', 'saveas', 'print', 'undo']" :key="n" :aria-label="n"><Icon :n="n" /></button>
        <i class="ar"></i>
        <button class="redo" aria-label="redo"><Icon n="redo" /></button>
        <i class="ar dim"></i>
        <span class="more"><i class="ar mid"></i></span>
      </div>
      <h1>Autodesk AutoCAD 2018<span>Drawing5.dwg</span></h1>
      <div class="info">
        <i class="play"></i>
        <input type="text" placeholder="键入关键字或短语" aria-label="搜索">
        <button class="b24" aria-label="搜索"><Icon n="binoc" /></button>
        <button class="login"><Icon n="user" />登录</button>
        <i class="ar"></i>
        <button class="b24 cart" aria-label="应用商店"><Icon n="cart" /></button>
        <button class="b24" aria-label="A360"><Icon n="tri" /></button>
        <i class="ar"></i>
        <span class="bar"></span>
        <button class="b24 help" aria-label="帮助"><Icon n="help" /><b>?</b></button>
        <i class="ar"></i>
      </div>
      <div class="winctl">
        <button v-for="n in ['min', 'restore', 'close']" :key="n" :aria-label="n"><Icon :n="n" /></button>
      </div>
    </header>

    <nav class="rtabs">
      <button v-for="(t, i) in ribbonTabs" :key="t" :class="{ on: i === 0 }">{{ t }}</button>
      <span class="pill"><Icon n="pill" /><i class="ar"></i></span>
    </nav>
    <button class="upload"><span><Icon n="cloud" /></span><em>拖拽上传</em></button>

    <section class="ribbon">
      <div class="panel p-draw">
        <div class="body">
          <button v-for="d in draw" :key="d.t" class="big" :class="d.n"><Icon :n="d.n" /><span>{{ d.t }}</span><i v-if="d.a" class="ar"></i></button>
          <div class="col">
            <button v-for="n in ['rect', 'ellipse', 'hatch']" :key="n" class="sm" :aria-label="n"><Icon :n="n" /><i class="ar"></i></button>
          </div>
        </div>
        <div class="cap">绘图<i class="ar wide"></i></div>
      </div>

      <div class="panel p-mod">
        <div class="body grid4">
          <button v-for="m in modify" :key="m.n" class="sm" :aria-label="m.t || m.n"><Icon :n="m.n" />{{ m.t }}<i v-if="m.a" class="ar"></i></button>
        </div>
        <div class="cap">修改<i class="ar wide"></i></div>
      </div>

      <div class="panel p-ann">
        <div class="body">
          <button class="big"><Icon n="letter" /><span>文字</span><i class="ar"></i></button>
          <button class="big"><Icon n="dim" /><span>标注</span></button>
          <div class="col">
            <button class="sm"><Icon n="linear" />线性<i class="ar"></i></button>
            <button class="sm"><Icon n="leader" />引线<i class="ar"></i></button>
            <button class="sm"><Icon n="table" />表格</button>
          </div>
        </div>
        <div class="cap">注释<i class="ar wide"></i></div>
      </div>

      <div class="panel p-lay">
        <div class="body">
          <button class="big"><Icon n="layers" /><span>图层<br>特性</span></button>
          <div class="col grow">
            <div class="combo lay"><Icon n="bulb" /><Icon n="sun" /><Icon n="padlock" /><i class="sw"></i><select aria-label="图层"><option>0</option></select><i class="ar wide"></i></div>
            <div class="row">
              <button v-for="n in ['off', 'iso', 'freeze', 'lock']" :key="n" class="sm ic" :aria-label="n"><Icon :n="n" /></button>
              <button class="sm"><Icon n="current" />置为当前</button>
            </div>
            <div class="row">
              <button v-for="n in ['on', 'uniso', 'thaw', 'unlock']" :key="n" class="sm ic" :aria-label="n"><Icon :n="n" /></button>
              <button class="sm"><Icon n="match" />匹配图层</button>
            </div>
          </div>
        </div>
        <div class="cap">图层<i class="ar wide"></i></div>
      </div>

      <div class="panel p-blk">
        <div class="body">
          <button class="big"><Icon n="insert" /><span>插入</span><i class="ar"></i></button>
          <div class="col">
            <button class="sm"><Icon n="create" />创建</button>
            <button class="sm"><Icon n="edit" />编辑</button>
            <button class="sm"><Icon n="attr" />编辑属性<i class="ar"></i></button>
          </div>
        </div>
        <div class="cap">块<i class="ar wide"></i></div>
      </div>

      <div class="panel p-prop">
        <div class="body">
          <button class="big"><Icon n="props" /><span>特性<br>匹配</span></button>
          <div class="col grow">
            <div class="row"><Icon n="wheel" /><div class="combo"><i class="sw lg"></i><select aria-label="颜色"><option>ByLayer</option></select><i class="ar wide"></i></div></div>
            <div class="row"><Icon n="weight" /><div class="combo"><i class="rule"></i><select aria-label="线宽"><option>ByLayer</option></select><i class="ar wide"></i></div></div>
            <div class="row"><Icon n="ltype" /><div class="combo"><i class="rule long"></i><select aria-label="线型"><option>ByLayer</option></select><i class="ar wide"></i></div></div>
          </div>
        </div>
        <div class="cap">特性<i class="ar wide"></i><Icon n="launch" class="launch" /></div>
      </div>

      <div class="panel p-grp">
        <div class="body">
          <button class="big"><Icon n="group" /><span>组</span></button>
          <div class="col">
            <button class="sm ic" aria-label="编辑组"><Icon n="gedit" /></button>
            <button class="sm ic" aria-label="添加到组"><Icon n="gadd" /></button>
            <button class="sm ic sel" aria-label="组选择"><Icon n="gsel" /></button>
          </div>
        </div>
        <div class="cap">组<i class="ar wide"></i></div>
      </div>

      <div class="panel p-util">
        <div class="body">
          <button class="big"><Icon n="measure" /><span>测量</span><i class="ar"></i></button>
          <div class="col">
            <button v-for="n in ['qsel', 'point', 'calc']" :key="n" class="sm ic" :aria-label="n"><Icon :n="n" /></button>
          </div>
        </div>
        <div class="cap">实用工具<i class="ar wide"></i></div>
      </div>

      <div class="panel p-clip">
        <div class="body">
          <button class="big"><Icon n="paste" /><span>粘贴</span><i class="ar"></i></button>
          <div class="col">
            <button v-for="n in ['cut', 'docs']" :key="n" class="sm ic" :aria-label="n"><Icon :n="n" /></button>
          </div>
        </div>
        <div class="cap">剪贴板</div>
      </div>

      <div class="panel p-view">
        <div class="body">
          <button class="big"><Icon n="base" /><span>基点</span><i class="ar"></i></button>
        </div>
        <div class="cap">视图<i class="ar wide"></i><Icon n="launch" class="launch" /></div>
      </div>
    </section>

    <nav class="docs">
      <div v-for="(d, i) in docs" :key="d" class="doc" :class="{ on: active === i }">
        <svg class="shape" viewBox="0 0 128 22" preserveAspectRatio="none" aria-hidden="true">
          <path d="M0 22C3 14 1 .5 12 .5h102C124 .5 122 20 130 22z" :fill="active === i ? 'url(#ga)' : 'url(#gt)'" :stroke="active === i ? '#909090' : '#707070'" />
        </svg>
        <button class="name" @click="active = i">{{ d }}</button>
        <button v-if="i" class="x" :aria-label="'关闭 ' + d"><Icon n="x" /></button>
      </div>
      <button class="add" aria-label="新图形">+</button>
    </nav>

    <main class="space">
      <div class="model">
        <svg class="sheet" aria-hidden="true">
          <g class="minor">
            <template v-for="g in grid" :key="g.x">
              <line v-if="!g.mx" :x1="g.x" y1="0" :x2="g.x" y2="100%" />
              <line v-if="!g.my" x1="0" :y1="g.y" x2="100%" :y2="g.y" />
            </template>
          </g>
          <g class="major">
            <template v-for="g in grid" :key="g.x">
              <line v-if="g.mx" :x1="g.x" y1="0" :x2="g.x" y2="100%" />
              <line v-if="g.my" x1="0" :y1="g.y" x2="100%" :y2="g.y" />
            </template>
          </g>
          <g class="ink" transform="translate(0 -173)">
            <path d="M344 696V325h540" stroke="#c4c5c8" stroke-width="1.500" />
            <path d="M344 696.500h540M883.500 325v372" />
            <path d="M371 337.500v346.500h500" stroke="#b0b2b6" stroke-width="1.500" />
            <path d="M370.500 337.500h501V684M646 684h225" />
            <path d="M521.500 382.500h55v81.500a12.500 12.500 0 0 1-25 0z" />
            <circle cx="564" cy="464" r="5.500" />
            <path d="M555 464h4M561 464h6M569 464h4M564 456v4M564 461v6M564 469v3" />
            <path d="M521.500 530.500h55v45h-55z" />
            <circle cx="551.500" cy="553" r="9" />
            <path d="M539 553h7M548 553h7M557 553h7M551.500 541v6M551.500 550v6M551.500 559v6" />
            <path d="M635.500 476.500v-94h45v94h-4v-90h-37v90zM635.500 464h4M676.500 464h4" />
            <path d="M698.500 500l39 22.500-31 18-39.500-21.500z" />
            <path d="M667 519l21 79c1 9 6 15.500 12 15.500 5 0 8.500-2 8.500-7M706 541v66l-3 5M708.500 606v-65l26-15v66l-2 3" />
            <path d="M737.500 522.500V592c-1 5-6 5-8.500 4.500-6-1-11-8-11.500-13.500l-9.500-36" />
            <ellipse cx="703.700" cy="521.500" rx="8.700" ry="5.200" />
            <path d="M696 521c4-3 12-3 15 1M701 519v6M703 519v6" />
            <ellipse cx="697" cy="602" rx="3.200" ry="5" transform="rotate(-20 697 602)" />
            <ellipse cx="726" cy="585" rx="3.200" ry="5" transform="rotate(-20 726 585)" />
            <path d="M695 598l4 8M724 581l4 8" />
            <path d="M708.500 634v50M723.500 654v30M757 654v30M827.500 634v30M708 684h163" />
            <path d="M708 634h163M790 634v50M805 634v30M790 644h37M708 654h119M708 664h163M708 674h82" stroke="#cdcfd2" stroke-width="1.300" />
            <path d="M856 231.500h45M908 231.500h45M904.500 183v45M904.500 235v45M901.500 228.500h6v6h-6z" />
            <path d="M.5 940v45" stroke="#454b53" />
            <path d="M-5 985.500h9.500v9H-5zM5 990.500h45" />
          </g>
          <text x="2" y="763">Y</text>
          <text x="54" y="816">X</text>
        </svg>

        <span class="vp">[俯视][二维线框]</span>
        <div class="mdi">
          <button v-for="n in ['mmin', 'mres', 'mclose']" :key="n" :aria-label="n"><Icon :n="n" /></button>
        </div>
        <div class="cube">
          <span class="n">北</span><span class="w">西</span><span class="e">东</span><span class="s">南</span>
          <button class="face"><span>上</span></button>
        </div>
        <button class="wcs">WCS<svg width="9" height="6" viewBox="0 0 9 6"><path d="M1 .5h7L4.500 5z" fill="none" stroke="#b4b6be" /></svg></button>

        <div class="history">
          <p><span>命令:</span> _qsave</p>
          <p class="last"><span>命令:</span></p>
        </div>
        <div class="cmd">
          <div class="grip"><i></i><button aria-label="关闭"><Icon n="cx" /></button><button aria-label="自定义"><Icon n="wrench" /></button></div>
          <Icon n="prompt" /><i class="ar mid dark"></i>
          <input type="text" placeholder="键入命令" aria-label="命令">
          <i class="up"></i>
        </div>
      </div>
      <div class="edge"></div>
    </main>

    <footer class="status">
      <div class="ltabs">
        <button class="on">模型</button><button>布局1</button><button>布局2</button><button class="plus" aria-label="新布局">+</button>
      </div>
      <div class="tools">
        <div class="box t">模型</div>
        <div class="box w65"><Icon n="sgrid" /><Icon n="sdots" /><i class="ar tri"></i></div>
        <div class="box w103"><Icon n="ortho" /><Icon n="polar" /><i class="ar tri"></i><Icon n="isod" /><i class="ar tri"></i></div>
        <div class="box w65 join"><Icon n="otrack" /><Icon n="osnap" /><i class="ar tri"></i></div>
        <div class="box w107"><Icon n="anb" /><Icon n="ans" /><Icon n="anp" /><span>1:1</span><i class="ar tri"></i></div>
        <div class="box w40"><Icon n="gear" /><i class="ar tri"></i></div>
        <div class="box w26 join"><Icon n="plus" /></div>
        <div class="box w26"><Icon n="shapes" /></div>
        <div class="box w26"><Icon n="perf" /></div>
        <div class="box w50"><Icon n="clean" /><Icon n="burger" /></div>
      </div>
    </footer>

    <footer class="taskbar">
      <button class="start" aria-label="开始"><Icon n="win" /></button>
      <label class="find"><Icon n="search" /><input type="text" placeholder="在这里输入你要搜索的内容"></label>
      <button v-for="a in apps" :key="a.n" class="task" :class="{ run: a.run, on: a.on, sys: !a.run }" :aria-label="a.l"><Icon :n="a.n" /></button>
      <div class="tray">
        <Icon n="weather" /><span class="temp">23°C&ensp;阴</span><Icon n="chev" class="chev" />
        <Icon n="wifi" /><Icon n="mute" /><Icon n="battery" />
        <span class="ime">英</span><span class="pin">拼</span>
        <div class="clock"><span>23:52</span><span>2022/5/18</span></div>
        <div class="note"><Icon n="note" /><b>4</b></div>
        <i class="peek"></i>
      </div>
    </footer>
  </div>
</template>

<style>
body { margin: 0; background: #383838; }
</style>

<style scoped>
.app { display: flex; flex-direction: column; min-height: 100vh; position: relative; overflow: hidden; font: 12px/16px "Open Sans", "Noto Sans CJK SC", sans-serif; color: #f0f0f0; }
.app * { box-sizing: border-box; }
.defs { position: absolute; }
button, input, select { font: inherit; color: inherit; border: 0; background: none; padding: 0; margin: 0; border-radius: 0; outline: 0; }
svg { flex: none; display: block; }
.ar { flex: none; width: 0; height: 0; border: solid transparent; border-width: 3px 3px 0; border-top-color: #f0f0f0; }
.ar.mid { border-width: 4px 4px 0; }
.ar.wide { border-width: 4px 4px 0; }
.ar.tri { border-width: 4px 4px 0; border-top-color: #fff; }
.ar.dim { border-top-color: #999; }
.ar.dark { border-top-color: #2b3038; }

.title { display: flex; height: 24px; background: #fff; }
.logo { position: absolute; z-index: 2; left: 0; top: 0; width: 20px; height: 41px; display: flex; align-items: center; justify-content: space-between; padding-right: 3px; background: linear-gradient(#bdbdbd, #6c6c6c); border: solid #000; border-width: 1px 1px 1px 0; }
.logo .ar { border-width: 4px 3px 0; }
.qat { display: flex; align-items: center; width: 214px; margin-left: 20px; padding-left: 5px; background: linear-gradient(#9a9a9a, #4c4c4c); border-top: 1px solid #555; }
.qat button { flex: none; width: 24px; display: flex; justify-content: center; }
.qat .ar { margin: 0 2px; }
.qat .redo { margin-left: 2px; }
.qat .more { display: flex; flex: none; border-top: 1px solid #eee; padding-top: 2px; margin-left: 4px; }
.qat .more .ar { margin: 0; }
h1 { flex: 1; margin: 0; display: flex; justify-content: center; align-items: center; gap: 14px; font-size: 13px; font-weight: 400; color: #111; }
.info { display: flex; align-items: center; width: 446px; padding: 0 4px 0 6px; background: linear-gradient(#9a9a9a, #4c4c4c); border-top: 1px solid #555; }
.play { border: solid transparent; border-width: 4px 0 4px 4px; border-left-color: #fff; margin-right: 4px; }
.info input { width: 180px; height: 21px; padding: 0 3px; background: #757575; border: 1px solid #333; font-style: italic; }
.info input::placeholder { color: #c8c8c8; opacity: 1; }
.b24 { width: 24px; display: flex; justify-content: center; }
.login { display: flex; align-items: center; gap: 5px; flex: 1; padding-left: 4px; }
.cart { margin-left: 8px; }
.bar { width: 1px; height: 22px; background: #888; margin: 0 2px 0 8px; }
.help { position: relative; width: 30px; }
.help b { position: absolute; left: 0; right: 0; text-align: center; color: #2250a8; font-size: 12px; line-height: 16px; }
.winctl { display: flex; width: 164px; padding-left: 26px; }
.winctl button { width: 45px; display: flex; align-items: center; justify-content: center; }

.rtabs { display: flex; height: 21px; padding-left: 25px; background: #535353; border-top: 1px solid #2a2a2a; border-bottom: 1px solid #2c2c2c; color: #d0d0d0; }
.rtabs button { padding: 2px 10px 0; }
.rtabs button:first-child { padding: 0 8px 0 9px; margin: 2px 0 -1px; background: linear-gradient(#7e7e7e, #5c5c5c); border: 1px solid #333; border-bottom: 0; border-radius: 2px 2px 0 0; line-height: 15px; color: #fff; }
.pill { display: flex; align-items: center; gap: 4px; margin-left: 21px; }
.upload { position: absolute; top: 28px; right: 107px; width: 104px; height: 25px; display: flex; background: #d6f0ff; border: 1px solid #1e9fff; border-radius: 4px; overflow: hidden; z-index: 2; }
.upload span { width: 29px; height: 23px; background: #1e9fff; display: flex; align-items: center; justify-content: center; }
.upload em { flex: 1; line-height: 24px; font-style: normal; color: #45aef5; }

.ribbon { display: flex; height: 99px; background: linear-gradient(#525252, #373737); border-bottom: 1px solid #8c8c8c; box-shadow: inset 0 -1px #222; padding-bottom: 1px; }
.panel { display: flex; flex-direction: column; flex: none; border-right: 1px solid #3f3f3f; border-left: 1px solid #6a6a6a; background: #5b5b5b; }
.body { display: flex; flex: 1; padding-top: 5px; }
.cap { height: 18px; display: flex; align-items: center; justify-content: center; gap: 6px; padding-top: 2px; background: linear-gradient(#4c4c4c, #424242); position: relative; }
.launch { position: absolute; right: 4px; top: 7px; }
.big { flex: none; width: 42px; height: 72px; display: flex; flex-direction: column; align-items: center; line-height: 17px; white-space: nowrap; }
.big span { margin-top: 6px; }
.big .ar { margin-top: 2px; }
.col { display: flex; flex-direction: column; }
.grow { flex: 1; }
.sm { height: 24px; display: flex; align-items: center; gap: 5px; white-space: nowrap; }
.sm .ar { margin-left: 4px; }
.ic { width: 24px; justify-content: center; }
.row { display: flex; height: 24px; }
.p-draw { width: 191px; border-left: 0; }
.p-draw .body { margin-left: -20px; }
.p-draw .pline, .p-draw .circle { width: 40px; }
.p-draw .arc { width: 44px; }
.p-draw .col { margin-left: 6px; }
.p-draw .sm .ar { margin-left: 2px; }
.p-draw .cap { padding-right: 22px; }
.p-mod { width: 227px; }
.grid4 { display: grid; grid-template: repeat(3, 24px) / 59px 59px 75px 20px; padding-left: 6px; }
.p-ann { width: 156px; }
.p-ann .big:first-child { width: 48px; }
.p-ann .big:nth-child(2) { width: 36px; }
.p-ann .col { margin-left: 5px; }
.p-lay { width: 252px; }
.p-lay .big { width: 40px; }
.p-lay .row .sm:last-child { margin-left: 4px; }
.combo { position: relative; flex: 1; height: 22px; display: flex; align-items: center; background: linear-gradient(#6e6e6e, #555); border: 1px solid #2f2f2f; }
.combo select { appearance: none; flex: 1; height: 20px; padding-right: 14px; }
.combo option { color: #111; }
.combo .ar { position: absolute; right: 1px; top: 8px; }
.lay { flex: none; margin: 0 2px 2px 0; gap: 3px; padding-left: 4px; }
.sw { width: 14px; height: 14px; background: #fff; border: 1px solid #111; margin: 0 2px 0 3px; }
.sw.lg { width: 16px; height: 16px; border-color: #aaa; margin: 0 10px 0 12px; }
.p-blk { width: 134px; }
.p-blk .col { margin-left: 2px; }
.p-prop { width: 244px; }
.p-prop .grow .row { gap: 2px; padding-right: 2px; }
.p-prop .row > svg { margin-top: 3px; }
.p-prop .cap { padding-right: 12px; }
.rule { flex: none; width: 59px; height: 1px; background: #eee; margin: 0 2px 0 8px; }
.rule.long { width: 64px; margin-left: 3px; }
.p-grp { width: 68px; }
.p-grp .big { width: 40px; }
.sel { background: #5a7ab5; border: 1px solid #2b3f68; height: 22px; }
.p-util { width: 76px; }
.p-util .big { width: 48px; }
.p-clip { width: 76px; }
.p-clip .big { width: 48px; }
.p-view { width: 61px; }
.p-view .big { width: 58px; }
.p-view .cap { justify-content: flex-start; padding-left: 4px; }

.docs { display: flex; height: 29px; padding-top: 3px; background: #383838; border-bottom: 4px solid #5b5b5b; color: #aaa; font-size: 13px; }
.doc { position: relative; display: flex; align-items: center; width: 123px; padding: 0 11px; }
.doc.on { z-index: 1; color: #fff; }
.shape { position: absolute; left: 0; top: 0; width: 128px; height: 22px; }
.name { position: relative; flex: 1; padding-top: 2px; text-align: left; font-size: 12px; }
.x { position: relative; }
.add { width: 22px; height: 14px; margin: 5px 0 0 8px; background: #5a5a5a; border-radius: 2px 8px 3px 8px; font: bold 14px/12px "Open Sans", sans-serif; color: #ccc; }

.space { flex: 1; display: flex; }
.model { flex: 1; position: relative; background: #21282f; overflow: hidden; }
.edge { width: 8px; background: linear-gradient(#b4cfe9 85px, #dceaf7 90px, #b4cfe9 91px); border-right: 2px solid #2ab4d8; }
.sheet { position: absolute; inset: 0; width: 100%; height: 100%; }
.minor { stroke: #262d36; }
.major { stroke: #2e3546; }
.ink { stroke: #f4f4f4; fill: none; }
.sheet text { fill: #f0f0f0; font: 200 18px "DejaVu Sans", sans-serif; }
.vp { position: absolute; left: 0; top: 6px; }
.mdi { position: absolute; right: 10px; top: 9px; display: flex; gap: 8px; }
.cube { position: absolute; right: 22px; top: 45px; width: 122px; height: 122px; border: 13px solid #42474f; border-radius: 50%; font: 18px/20px "Noto Sans CJK SC", sans-serif; color: #a4a6a8; }
.cube > span { position: absolute; }
.n { left: 39px; top: -18px; }
.s { left: 39px; bottom: -19px; }
.w { left: -17px; top: 38px; }
.e { right: -17px; top: 38px; }
.face { position: absolute; left: 22px; top: 22px; width: 52px; height: 52px; background: #a9abad; border: 1px solid #84878a; }
.face span { display: block; margin: 0 auto; width: 32px; background: #9ba4ab; font: 300 28px/32px "Noto Sans CJK SC", sans-serif; color: #4b535b; }
.wcs { position: absolute; right: 59px; top: 193px; width: 48px; height: 18px; display: flex; align-items: center; justify-content: center; gap: 6px; background: #8f929d; border: 1px solid #a3a5af; border-radius: 5px; color: #50535c; font: 11px/16px "Liberation Sans", sans-serif; }
.history { position: absolute; left: 430px; bottom: 30px; display: flex; flex-direction: column; align-items: flex-start; gap: 4px; }
.history p { margin: 0; padding: 0 2px; background: #505356; border-radius: 2px; color: #bbb; font: 12px/15px "DejaVu Sans Mono", monospace; }
.history span { font: 13px/15px "DejaVu Sans Mono", "Noto Sans CJK SC", monospace; }
.history .last { color: #eee; background: #5c5e60; }
.cmd { position: absolute; left: 371px; right: 382px; bottom: 1px; height: 26px; display: flex; align-items: center; background: #bebfc2; border: 1px solid #777; }
.grip { width: 52px; height: 24px; margin-right: 4px; padding: 0 4px 0 2px; display: flex; align-items: center; gap: 8px; background: linear-gradient(#707070, #3e3e3e); }
.grip button:last-child { margin-left: auto; }
.grip i { width: 5px; height: 17px; background: repeating-linear-gradient(#999 0 1px, transparent 1px 3px); }
.cmd > .ar { margin: 0 8px 0 2px; border-width: 4px 3px 0; border-top-color: #666; }
.cmd input { flex: 1; font-style: italic; font-size: 13px; color: #333; }
.cmd input::placeholder { color: #777; opacity: 1; }
.up { border: solid transparent; border-width: 0 4px 4px; border-bottom-color: #111; margin-right: 3px; }

.status { display: flex; justify-content: space-between; height: 29px; background: #383838; border-top: 1px solid #555; }
.ltabs { display: flex; align-items: flex-start; color: #aaa; }
.ltabs button { width: 54px; height: 17px; background: #565656; border-radius: 0 0 10px 10px; }
.ltabs .on { width: 37px; padding-right: 8px; margin-right: 1px; background: linear-gradient(#6c6c6c, #8a8a8a); border-radius: 0 0 12px 0; color: #fff; font-weight: 700; }
.ltabs .plus { width: 22px; height: 16px; margin-left: 4px; border-radius: 8px 2px 10px 4px; font: bold 14px/14px "Open Sans", sans-serif; color: #ccc; }
.tools { display: flex; gap: 1px; padding-right: 1px; background: #484848; }
.box { display: flex; align-items: center; justify-content: space-between; height: 27px; padding: 0 4px; background: #525252; border: 1px solid #808080; }
.box.t { width: 29px; padding: 0; justify-content: center; color: #fff; }
.box.join { margin-left: -1px; border-left: 0; }
.w65 { width: 65px; }
.w103 { width: 103px; }
.w107 { width: 107px; }
.box.w40 { width: 41px; padding-left: 5px; }
.w26 { width: 26px; justify-content: center; }
.w50 { width: 50px; }

.taskbar { display: flex; height: 40px; background: linear-gradient(90deg, #20363f, #20363f 60%, #1a2843 85%, #1a2843); }
.start { width: 27px; display: flex; align-items: center; margin-right: 0; }
.start svg { margin-left: -11px; }
.find { width: 344px; display: flex; align-items: center; gap: 11px; padding-left: 11px; background: #f2f2f2; border: 1px solid #bbb; }
.find input { flex: 1; font-size: 14px; color: #333; }
.find input::placeholder { color: #333; opacity: 1; }
.task { position: relative; width: 49px; display: flex; align-items: center; justify-content: center; }
.task.sys { width: 48px; }
.task.sys + .run { margin-left: 3px; }
.task.sys + .sys + .sys { width: 48px; margin-left: 2px; margin-right: -2px; }
.task.on { background: #4b5f67; }
.task.run::after { content: ""; position: absolute; left: 4px; right: 5px; bottom: 0; height: 2px; background: #4f88c4; }
.task.on::after { left: 0; right: 0; }
.tray { display: flex; align-items: center; margin-left: auto; gap: 8px; color: #fff; font-size: 14px; }
.tray .chev { margin: 0 28px 0 10px; }
.ime { font-size: 15px; }
.pin { width: 16px; height: 16px; margin: 0 6px 0 6px; background: #fff; color: #000; line-height: 16px; text-align: center; }
.clock { display: flex; flex-direction: column; width: 64px; text-align: center; font-size: 12px; line-height: 18px; }
.note { position: relative; width: 25px; margin-left: 9px; }
.note b { position: absolute; left: 8px; top: 5px; width: 16px; height: 16px; border-radius: 8px; background: #333a44; border: 1px solid #99a; font-size: 11px; line-height: 14px; text-align: center; }
.peek { width: 1px; height: 40px; margin: 0 4px 0 0; background: #66707f; }
</style>
